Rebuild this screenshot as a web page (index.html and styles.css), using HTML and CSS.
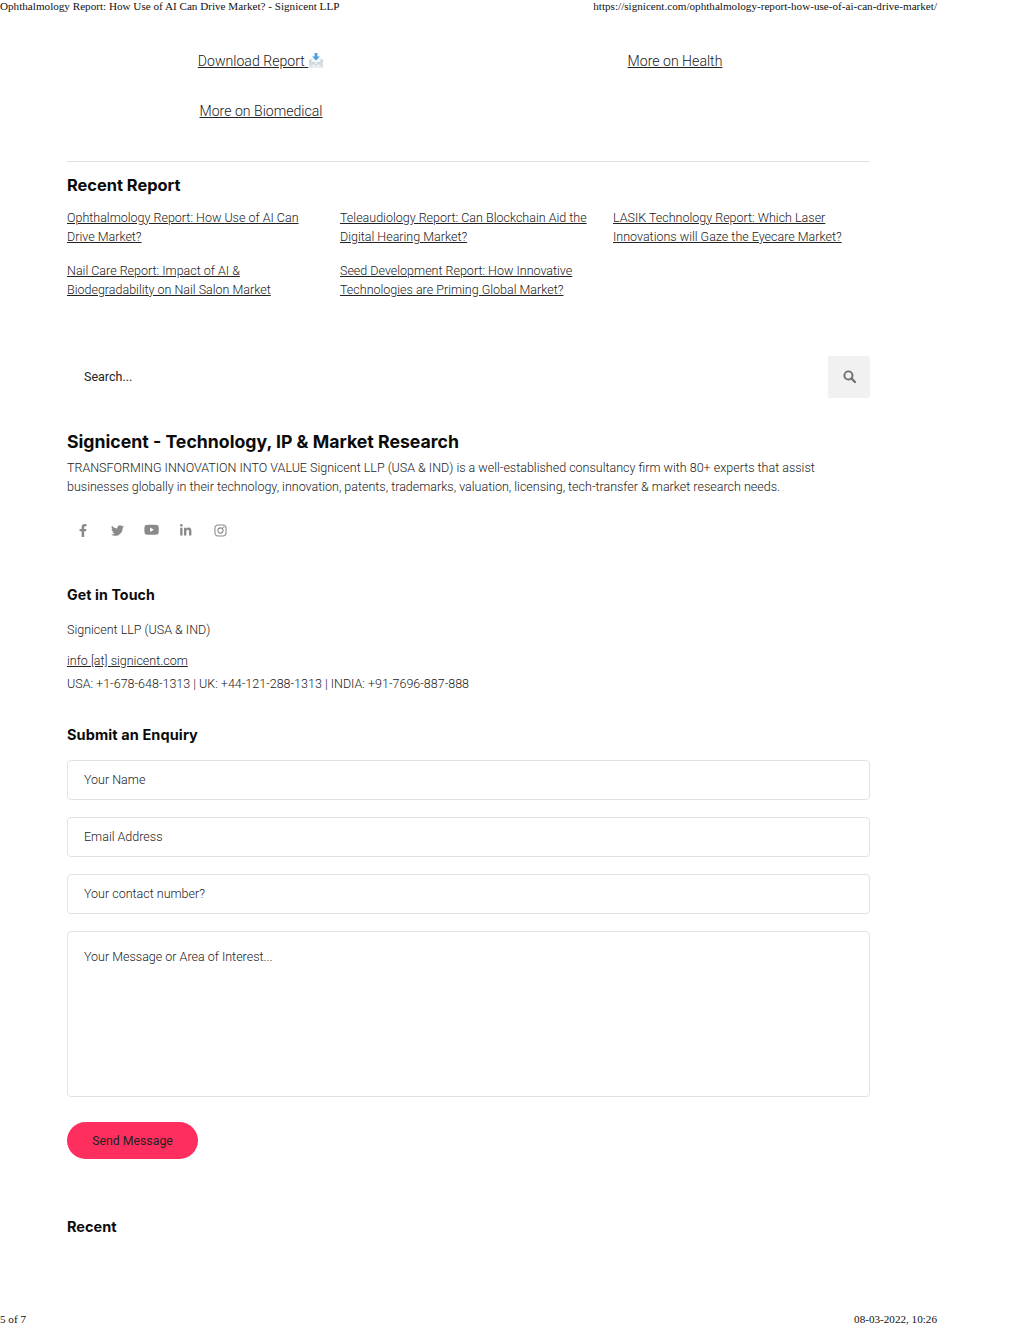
FILE: index.html
```html
<!DOCTYPE html>
<html lang="en">
<head>
<meta charset="utf-8">
<title>Ophthalmology Report: How Use of AI Can Drive Market? - Signicent LLP</title>
<link rel="stylesheet" href="styles.css">
</head>
<body>
<div class="sheet">
  <header class="print-bar print-top">
    <span>Ophthalmology Report: How Use of AI Can Drive Market? - Signicent LLP</span>
    <span>https://signicent.com/ophthalmology-report-how-use-of-ai-can-drive-market/</span>
  </header>
  <main class="content">
    <section class="more-links">
      <a href="#">Download Report <svg class="mail-icon" viewBox="0 0 16 16" aria-hidden="true"><path d="M1 7 8 2l7 5v8H1z" fill="#d5dde2"/><path d="M1 15 8 9l7 6z" fill="#e9eef1"/><path d="M1 7l7 5 7-5" fill="none" stroke="#b9c4cb" stroke-width=".7"/><rect x="3.5" y="3" width="9" height="6" fill="#f4f6f7"/><path d="M6.6 0h2.8v3.4h2.4L8 7.6 4.2 3.4h2.4z" fill="#4a9fe0"/></svg></a>
      <a href="#">More on Health</a>
      <a href="#" class="bio">More on Biomedical</a>
    </section>
    <section class="recent">
      <h2 class="title-md">Recent Report</h2>
      <div class="report-grid">
        <a href="#">Ophthalmology Report: How Use of AI Can Drive Market?</a>
        <a href="#">Teleaudiology Report: Can Blockchain Aid the Digital Hearing Market?</a>
        <a href="#">LASIK Technology Report: Which Laser Innovations will Gaze the Eyecare Market?</a>
        <a href="#">Nail Care Report: Impact of AI &amp; Biodegradability on Nail Salon Market</a>
        <a href="#">Seed Development Report: How Innovative Technologies are Priming Global Market?</a>
      </div>
    </section>
    <form class="search">
      <input class="search-input" type="text" placeholder="Search...">
      <button class="search-btn" type="button" aria-label="Search"><svg viewBox="0 0 16 16" width="13" height="13"><circle cx="6.7" cy="6.7" r="5" fill="none" stroke="#6f6f6f" stroke-width="2.4"/><path d="M10.5 10.5 15 15" stroke="#6f6f6f" stroke-width="2.8" stroke-linecap="round"/></svg></button>
    </form>
    <section class="about">
      <h1 class="title-lg">Signicent - Technology, IP &amp; Market Research</h1>
      <p>TRANSFORMING INNOVATION INTO VALUE Signicent LLP (USA &amp; IND) is a well-established consultancy firm with 80+ experts that assist businesses globally in their technology, innovation, patents, trademarks, valuation, licensing, tech-transfer &amp; market research needs.</p>
      <div class="social">
        <a href="#" aria-label="Facebook"><svg viewBox="0 0 320 512" height="13"><path d="M279.14 288l14.22-92.66h-88.91v-60.13c0-25.35 12.42-50.06 52.24-50.06h40.42V6.26S260.43 0 225.36 0c-73.22 0-121.08 44.38-121.08 124.72v70.62H22.89V288h81.39v224h100.17V288z"/></svg></a>
        <a href="#" aria-label="Twitter"><svg viewBox="0 0 512 512" height="13"><path d="M459.37 151.716c.325 4.548.325 9.097.325 13.645 0 138.72-105.583 298.558-298.558 298.558-59.452 0-114.68-17.219-161.137-47.106 8.447.974 16.568 1.299 25.34 1.299 49.055 0 94.213-16.568 130.274-44.832-46.132-.975-84.792-31.188-98.112-72.772 6.498.974 12.995 1.624 19.818 1.624 9.421 0 18.843-1.3 27.614-3.573-48.081-9.747-84.143-51.98-84.143-102.985v-1.299c13.969 7.797 30.214 12.67 47.431 13.319-28.264-18.843-46.781-51.005-46.781-87.391 0-19.492 5.197-37.36 14.294-52.954 51.655 63.675 129.3 105.258 216.365 109.807-1.624-7.797-2.599-15.918-2.599-24.04 0-57.828 46.782-104.934 104.934-104.934 30.213 0 57.502 12.67 76.67 33.137 23.715-4.548 46.456-13.32 66.599-25.34-7.798 24.366-24.366 44.833-46.132 57.827 21.117-2.273 41.584-8.122 60.426-16.243-14.292 20.791-32.161 39.308-52.628 54.253z"/></svg></a>
        <a href="#" aria-label="YouTube"><svg viewBox="0 0 576 512" height="13.5"><path d="M549.655 124.083c-6.281-23.65-24.787-42.276-48.284-48.597C458.781 64 288 64 288 64S117.22 64 74.629 75.486c-23.497 6.322-42.003 24.947-48.284 48.597-11.412 42.867-11.412 132.305-11.412 132.305s0 89.438 11.412 132.305c6.281 23.65 24.787 41.5 48.284 47.821C117.22 448 288 448 288 448s170.78 0 213.371-11.486c23.497-6.321 42.003-24.171 48.284-47.821 11.412-42.867 11.412-132.305 11.412-132.305s0-89.438-11.412-132.305zm-317.51 213.508V175.185l142.739 81.205-142.739 81.201z"/></svg></a>
        <a href="#" aria-label="LinkedIn"><svg viewBox="0 0 448 512" height="13"><path d="M100.28 448H7.4V148.9h92.88zM53.79 108.1C24.09 108.1 0 83.5 0 53.8a53.79 53.79 0 0 1 107.58 0c0 29.7-24.1 54.3-53.79 54.3zM447.9 448h-92.68V302.4c0-34.7-.7-79.2-48.29-79.2-48.29 0-55.69 37.7-55.69 76.7V448h-92.78V148.9h89.08v40.8h1.3c12.4-23.5 42.69-48.3 87.88-48.3 94 0 111.28 61.9 111.28 142.3V448z"/></svg></a>
        <a href="#" aria-label="Instagram"><svg viewBox="0 0 16 16" height="13"><rect x="1.2" y="1.2" width="13.6" height="13.6" rx="3.6" fill="none" stroke="#8a8a8a" stroke-width="1.3"/><circle cx="8" cy="8" r="3.2" fill="none" stroke="#8a8a8a" stroke-width="1.3"/><circle cx="12" cy="4" r=".9"/></svg></a>
      </div>
    </section>
    <section class="contact">
      <h3 class="title-sm touch">Get in Touch</h3>
      <p class="org">Signicent LLP (USA &amp; IND)</p>
      <p class="mail"><a href="#">info [at] signicent.com</a></p>
      <p>USA: +1-678-648-1313 | UK: +44-121-288-1313 | INDIA: +91-7696-887-888</p>
    </section>
    <form class="enquiry">
      <h3 class="title-sm">Submit an Enquiry</h3>
      <input class="field" type="text" placeholder="Your Name">
      <input class="field" type="email" placeholder="Email Address">
      <input class="field" type="tel" placeholder="Your contact number?">
      <textarea class="field message" placeholder="Your Message or Area of Interest..."></textarea>
      <button class="send" type="button">Send Message</button>
    </form>
    <h3 class="title-sm recent-end">Recent</h3>
  </main>
  <footer class="print-bar print-bottom">
    <span>5 of 7</span>
    <span>08-03-2022, 10:26</span>
  </footer>
</div>
</body>
</html>
```
FILE: styles.css
```css
* { box-sizing: border-box; }
html, body { margin: 0; padding: 0; background: #fff; }
body { font-family: Roboto, "Liberation Sans", sans-serif; font-weight: 300; color: #222; font-size: 12.5px; line-height: 19px; }
a { color: inherit; text-decoration: underline; }
p { margin: 0; }
h1, h2, h3 { margin: 0; color: #0b0b0b; font-family: Inter, "Liberation Sans", sans-serif; font-weight: 700; }

.sheet { width: 1024px; height: 1325px; display: flex; flex-direction: column; }
.print-bar { width: 937px; display: flex; justify-content: space-between; font-family: "Liberation Serif", serif; font-weight: 400; font-size: 11.15px; line-height: 13px; color: #111; }
.print-top { height: 13px; }
.print-bottom { height: 13px; transform: translateY(1px); }

.content { flex: 1; padding-left: 67px; width: 870px; display: flex; flex-direction: column; }

.more-links { margin: 39px -12px 0 -13px; display: grid; grid-template-columns: 414px 414px; row-gap: 31px; font-size: 14.1px; line-height: 19px; text-align: center; height: 109px; align-content: start; }
.more-links a { justify-self: center; }
.mail-icon { width: 16px; height: 16px; vertical-align: -3px; }

.recent { border-top: 1px solid #e2e2e2; padding-top: 14px; }
.title-md { font-size: 16.4px; line-height: 19px; }
.report-grid { margin-top: 13px; display: grid; grid-template-columns: 273px 273px 257px; row-gap: 15px; line-height: 19px; }
.report-grid a { padding-right: 15px; }

.search { margin-top: 57px; height: 42px; display: flex; }
.search-input { flex: 1; border: 0; outline: 0; padding: 0 17px 2px; font: 400 12.5px Roboto, sans-serif; background: #fff; }
.search-input::placeholder { color: #222; opacity: 1; }
.search-btn { width: 42px; border: 0; padding: 0 0 2px; background: #f1f1f1; border-radius: 0 3px 3px 0; display: flex; align-items: center; justify-content: center; }

.about { margin-top: 32px; }
.title-lg { font-size: 17.7px; line-height: 23px; margin-bottom: 5px; }
.social { margin-top: 17px; display: flex; margin-left: -1px; }
.social a { width: 34.3px; height: 34px; display: flex; align-items: center; justify-content: center; }
.social svg { fill: #8a8a8a; display: block; }

.contact { margin-top: 38px; }
.title-sm { font-size: 14.5px; line-height: 19px; letter-spacing: .1px; }
.touch { font-size: 14.2px; }
.org { margin-top: 16px; }
.mail { margin-top: 12px; margin-bottom: 4px; }

.enquiry { margin-top: 32px; display: flex; flex-direction: column; align-items: flex-start; }
.enquiry .title-sm { margin-bottom: 16px; }
.field { width: 100%; height: 40px; margin-bottom: 17px; padding: 0 16px 2px; border: 1px solid #e2e2e2; border-radius: 4px; outline: 0; font: 300 12.5px/19px Roboto, sans-serif; color: #222; background: #fff; }
.field::placeholder { color: #222; opacity: 1; }
.message { height: 166px; padding-top: 15px; margin-bottom: 25px; resize: none; display: block; }
.send { width: 131px; height: 37px; border: 0; border-radius: 19px; background: #fe2f5f; color: #222; font: 400 12.3px Roboto, sans-serif; }
.recent-end { margin-top: 58px; letter-spacing: 0; }
```
